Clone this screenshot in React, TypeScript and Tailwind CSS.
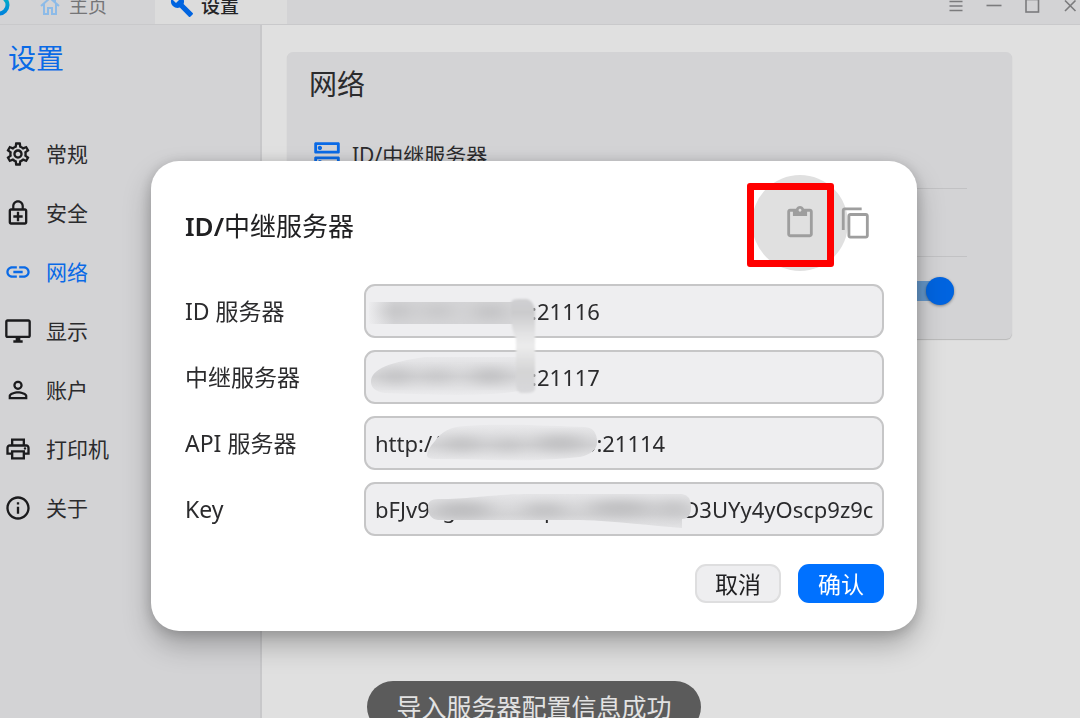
import { useState } from "react";
import {
  MdBuild,
  MdContentCopy,
  MdInfoOutline,
  MdLink,
  MdOutlineContentPaste,
  MdOutlineDesktopWindows,
  MdOutlineDns,
  MdOutlineEnhancedEncryption,
  MdOutlinePrint,
  MdOutlineSettings,
  MdPersonOutline,
} from "react-icons/md";

const navItems = [
  { label: "常规", Icon: MdOutlineSettings },
  { label: "安全", Icon: MdOutlineEnhancedEncryption },
  { label: "网络", Icon: MdLink, active: true },
  { label: "显示", Icon: MdOutlineDesktopWindows },
  { label: "账户", Icon: MdPersonOutline },
  { label: "打印机", Icon: MdOutlinePrint },
  { label: "关于", Icon: MdInfoOutline },
];

const fields = [
  { id: "id-server", label: "ID 服务器", value: "000.000.000.00:21116" },
  { id: "relay-server", label: "中继服务器", value: "000.000.000.00:21117" },
  { id: "api-server", label: "API 服务器", value: "http://000.000.000.00:21114" },
  { id: "key", label: "Key", value: "bFJv90g0000000p0000000000D3UYy4yOscp9z9c" },
];

function TitleBar() {
  return (
    <header className="-mt-3 flex h-[37px] shrink-0 items-stretch border-b border-[#c9c9cb] bg-[#d3d3d5]">
      <div className="flex w-[155px] items-center">
        <svg className="-ml-3 size-[22px]" viewBox="0 0 22 22" fill="none" aria-hidden="true">
          <defs>
            <linearGradient id="logo" x1="0" y1="0" x2="0" y2="1">
              <stop offset="0" stopColor="#00b4c4" />
              <stop offset="1" stopColor="#0084dc" />
            </linearGradient>
          </defs>
          <circle cx="11" cy="10" r="8.500" stroke="url(#logo)" strokeWidth="4" />
        </svg>
        <a href="#home" className="ml-[30px] flex items-center text-[19px] leading-6 text-[#757577]">
          <svg className="mr-[9px] size-5" viewBox="0 0 20 20" fill="none" stroke="#8dbbe8" strokeWidth="2" aria-hidden="true">
            <path d="M1 10 10 2l9 8M4 8v10h4v-6h4v6h4V8M15 6V2" />
          </svg>
          主页
        </a>
      </div>
      <a href="#settings" className="flex w-[132px] items-center bg-[#dcdcdc] pl-[15px] text-[19px] leading-6 font-medium text-[#242426]">
        <MdBuild className="mr-[7px] size-6 text-[#0064e0]" aria-hidden="true" />
        设置
      </a>
      <div className="ml-auto flex items-center gap-[22px] pr-[2px] text-[#7b7b7d]">
        <button type="button" aria-label="菜单">
          <svg className="block size-4" viewBox="0 0 16 16" stroke="currentColor" strokeWidth="1.6">
            <path d="M1.500 3.500h13M1.500 8h13M1.500 12.500h13" />
          </svg>
        </button>
        <button type="button" aria-label="最小化">
          <svg className="block size-4" viewBox="0 0 16 16" stroke="currentColor" strokeWidth="1.6">
            <path d="M.5 7.500h15" />
          </svg>
        </button>
        <button type="button" aria-label="最大化">
          <svg className="block size-4" viewBox="0 0 16 16" fill="none" stroke="currentColor" strokeWidth="1.6">
            <rect x="2" y="1.500" width="12.500" height="12.500" />
          </svg>
        </button>
        <button type="button" aria-label="关闭">
          <svg className="block size-4" viewBox="0 0 16 16" stroke="currentColor" strokeWidth="1.6">
            <path d="m3 2.500 10.500 10.500M13.500 2.500 3 13" />
          </svg>
        </button>
      </div>
    </header>
  );
}

function Sidebar() {
  return (
    <aside className="w-[262px] shrink-0 border-r-2 border-[#c8c8ca] bg-[#d3d3d5]">
      <h1 className="flex h-[66px] items-center pl-2 text-[28px] leading-9 text-[#0a6ae6]">设置</h1>
      <nav className="mt-[33px] flex flex-col">
        {navItems.map(({ label, Icon, active }) => (
          <a
            key={label}
            href={"#" + label}
            className={
              active
                ? "flex h-[59px] items-center gap-[14px] pl-1 text-[21px] leading-7 text-[#0a6ae6]"
                : "flex h-[59px] items-center gap-[14px] pl-1 text-[21px] leading-7 text-[#2b2b2d]"
            }
          >
            <Icon className={active ? "size-7" : "size-7 text-[#1b1b1d]"} aria-hidden="true" />
            {label}
          </a>
        ))}
      </nav>
    </aside>
  );
}

function NetworkCard() {
  return (
    <section className="ml-[25px] mr-[68px] mt-[27px] rounded-md bg-[#d3d3d5] pb-[14px] shadow-[0_1px_1px_rgba(0,0,0,0.18)]">
      <h2 className="flex h-16 items-center pl-[22px] text-[28px] leading-9 text-[#2b2b2d]">网络</h2>
      <div className="ml-[23px] mr-[45px] mt-[6px]">
        <div className="flex h-[67px] items-center gap-2 border-b border-[#c2c2c4] text-[21px] leading-7 text-[#2b2b2d]">
          <MdOutlineDns className="size-[34px] text-[#0a6ae6]" aria-hidden="true" />
          ID/中继服务器
        </div>
        <div className="h-[68px] border-b border-[#c2c2c4]" />
        <div className="flex h-[68px] items-center justify-end pr-[13px]">
          <input
            type="checkbox"
            role="switch"
            aria-label="网络"
            defaultChecked
            className="relative h-5 w-[58px] appearance-none rounded-full bg-[#6699cc] before:absolute before:right-0 before:-top-1 before:size-7 before:rounded-full before:bg-[#0064e0] before:shadow-[0_1px_3px_rgba(0,0,0,0.4)]"
          />
        </div>
      </div>
    </section>
  );
}

/* Smudges that hide the private part of every address. */
function Redactions() {
  return (
    <svg
      className="pointer-events-none absolute left-[179px] top-0 h-[252px] w-[520px]"
      viewBox="364 285 520 252"
      aria-hidden="true"
    >
      <defs>
        <filter id="soft" x="-50%" y="-50%" width="200%" height="200%">
          <feGaussianBlur stdDeviation="11 6" />
        </filter>
        <filter id="edge" x="-10%" y="-20%" width="120%" height="140%">
          <feGaussianBlur stdDeviation="1" />
        </filter>
        <linearGradient id="fade" gradientUnits="userSpaceOnUse" x1="368" x2="394" y1="0" y2="0">
          <stop offset="0" stopColor="#eeeef0" />
          <stop offset="1" stopColor="#d4d4d6" />
        </linearGradient>
        <linearGradient id="fall" x1="0" y1="0" x2="0" y2="1">
          <stop offset="0" stopColor="#ededef" />
          <stop offset="0.250" stopColor="#e2e2e4" />
          <stop offset="0.550" stopColor="#d4d4d6" />
          <stop offset="0.950" stopColor="#ebebed" />
          <stop offset="1" stopColor="#ededef" />
        </linearGradient>
        <linearGradient id="bar" x1="0" y1="0" x2="0" y2="1">
          <stop offset="0" stopColor="#d0d0d2" />
          <stop offset="0.150" stopColor="#cbcbcd" />
          <stop offset="0.360" stopColor="#e2e2e3" />
          <stop offset="0.500" stopColor="#ececec" />
          <stop offset="0.780" stopColor="#d4d4d5" />
          <stop offset="1" stopColor="#d9d9db" />
        </linearGradient>
        <clipPath id="m1"><path d="M369 303H520V325H369Z" /></clipPath>
        <clipPath id="m2"><path d="M371 383C371 370 390 363 425 358H524V391C490 398 440 396 385 394Q371 392 371 383Z" /></clipPath>
        <clipPath id="m3"><path d="M427 457Q426 452 435 442Q444 428 465 427C500 424 555 427 585 428Q597 429 597 443Q597 454 580 458C530 464 480 460 435 460Q428 460 427 457Z" /></clipPath>
        <clipPath id="m4"><path d="M428 507Q428 500 438 500C475 500 490 495 530 495H682Q691 496 691 508Q691 520 682 520V529C650 527 620 522 580 521H438Q428 520 428 507Z" /></clipPath>
      </defs>
      <g clipPath="url(#m1)">
        <path d="M360 295H530V335H360Z" fill="url(#fade)" />
        <g filter="url(#soft)" fill="#bdbdbf">
          <ellipse cx="397" cy="312" rx="12" ry="7" />
          <ellipse cx="438" cy="312" rx="11" ry="6" />
          <ellipse cx="490" cy="313" rx="15" ry="7" />
        </g>
      </g>
      <g clipPath="url(#m2)">
        <path d="M365 353H530V398H365Z" fill="url(#fall)" />
        <g filter="url(#soft)" fill="#bdbdbf">
          <ellipse cx="396" cy="377" rx="14" ry="7" />
          <ellipse cx="437" cy="377" rx="11" ry="6" />
          <ellipse cx="490" cy="377" rx="18" ry="7" />
        </g>
      </g>
      <path
        d="M511 304Q511 300 519 300H527Q534 302 535 312V390Q535 394 526 394H521Q516 393 516 385V340Q511 330 511 315Z"
        fill="url(#bar)"
        filter="url(#edge)"
      />
      <g clipPath="url(#m3)">
        <path d="M420 422H600V466H420Z" fill="url(#fall)" />
        <g filter="url(#soft)" fill="#bdbdbf">
          <ellipse cx="462" cy="445" rx="20" ry="6" />
          <ellipse cx="508" cy="446" rx="12" ry="6" />
          <ellipse cx="560" cy="444" rx="26" ry="7" />
        </g>
      </g>
      <g clipPath="url(#m4)">
        <path d="M420 485H700V540H420Z" fill="url(#fall)" />
        <g filter="url(#soft)" fill="#bbbbbd">
          <ellipse cx="462" cy="511" rx="30" ry="8" />
          <ellipse cx="545" cy="511" rx="22" ry="6" />
          <ellipse cx="620" cy="509" rx="34" ry="7" />
          <ellipse cx="674" cy="509" rx="14" ry="7" />
        </g>
      </g>
    </svg>
  );
}

function ServerDialog() {
  const [values, setValues] = useState<Record<string, string>>(
    Object.fromEntries(fields.map((f) => [f.id, f.value])),
  );

  return (
    <div className="fixed inset-0 flex items-start justify-center pr-3 pt-[161px]">
      <div
        role="dialog"
        aria-labelledby="dialog-title"
        className="w-full max-w-[766px] rounded-[28px] bg-white pb-7 pl-[34px] pr-[33px] pt-8 shadow-[0_14px_28px_rgba(0,0,0,0.26),0_2px_14px_rgba(0,0,0,0.18)]"
      >
        <div className="flex h-[66px] items-center justify-between pr-[11px]">
          <h2 id="dialog-title" className="text-[26px] leading-9 text-[#202022]">
            <span className="font-semibold">ID/</span>中继服务器
          </h2>
          <div className="flex gap-[22px] pb-[7px] text-[#9e9e9e]">
            <button type="button" aria-label="导入服务器配置" className="relative size-[34px]">
              <span className="absolute -left-[31px] -top-[31px] size-24 rounded-full bg-[#e0e0e0]" />
              <MdOutlineContentPaste className="relative size-[34px]" />
              <span className="absolute -left-9 -top-[23px] h-[84px] w-[87px] rounded-[3px] border-[7px] border-[#ff0000]" />
            </button>
            <button type="button" aria-label="导出服务器配置" className="relative size-[34px]">
              <MdContentCopy className="size-[34px]" />
            </button>
          </div>
        </div>

        <form onSubmit={(e) => e.preventDefault()} className="mt-[25px]">
          <div className="relative flex flex-col gap-3">
            {fields.map((f) => (
              <div key={f.id} className="flex items-center">
                <label htmlFor={f.id} className="w-[179px] shrink-0 text-[23px] leading-8 text-[#2b2b2d]">
                  {f.label}
                </label>
                <input
                  id={f.id}
                  type="text"
                  value={values[f.id]}
                  onChange={(e) => setValues({ ...values, [f.id]: e.target.value })}
                  className="h-[54px] min-w-0 flex-1 rounded-[11px] border-2 border-[#c6c6c7] bg-[#eeeef0] px-[9px] text-[22px] text-[#2b2b2d] outline-none"
                />
              </div>
            ))}
            <Redactions />
          </div>
          <div className="mt-7 flex justify-end gap-[17px] text-[23px] leading-8">
            <button type="button" className="h-[39px] w-[86px] rounded-[11px] border-2 border-[#dededf] bg-[#eeeef0] leading-8 text-[#202022]">
              取消
            </button>
            <button type="submit" className="h-[39px] w-[86px] rounded-[11px] bg-[#0071ff] leading-8 text-white">
              确认
            </button>
          </div>
        </form>
      </div>
    </div>
  );
}

export default function App() {
  return (
    <div className="flex h-screen flex-col overflow-hidden bg-[#e0e0e0] font-['Noto_Sans','Noto_Sans_CJK_SC',sans-serif]">
      <TitleBar />
      <div className="flex flex-1">
        <Sidebar />
        <main className="flex-1">
          <NetworkCard />
        </main>
      </div>
      <ServerDialog />
      <div role="status" className="fixed inset-x-0 -bottom-[15px] flex justify-center pr-3">
        <div className="flex h-[52px] items-center rounded-full bg-[#5b5b5b] px-[29px] text-[25px] leading-8 text-[#e2e2e2]">
          导入服务器配置信息成功
        </div>
      </div>
    </div>
  );
}
